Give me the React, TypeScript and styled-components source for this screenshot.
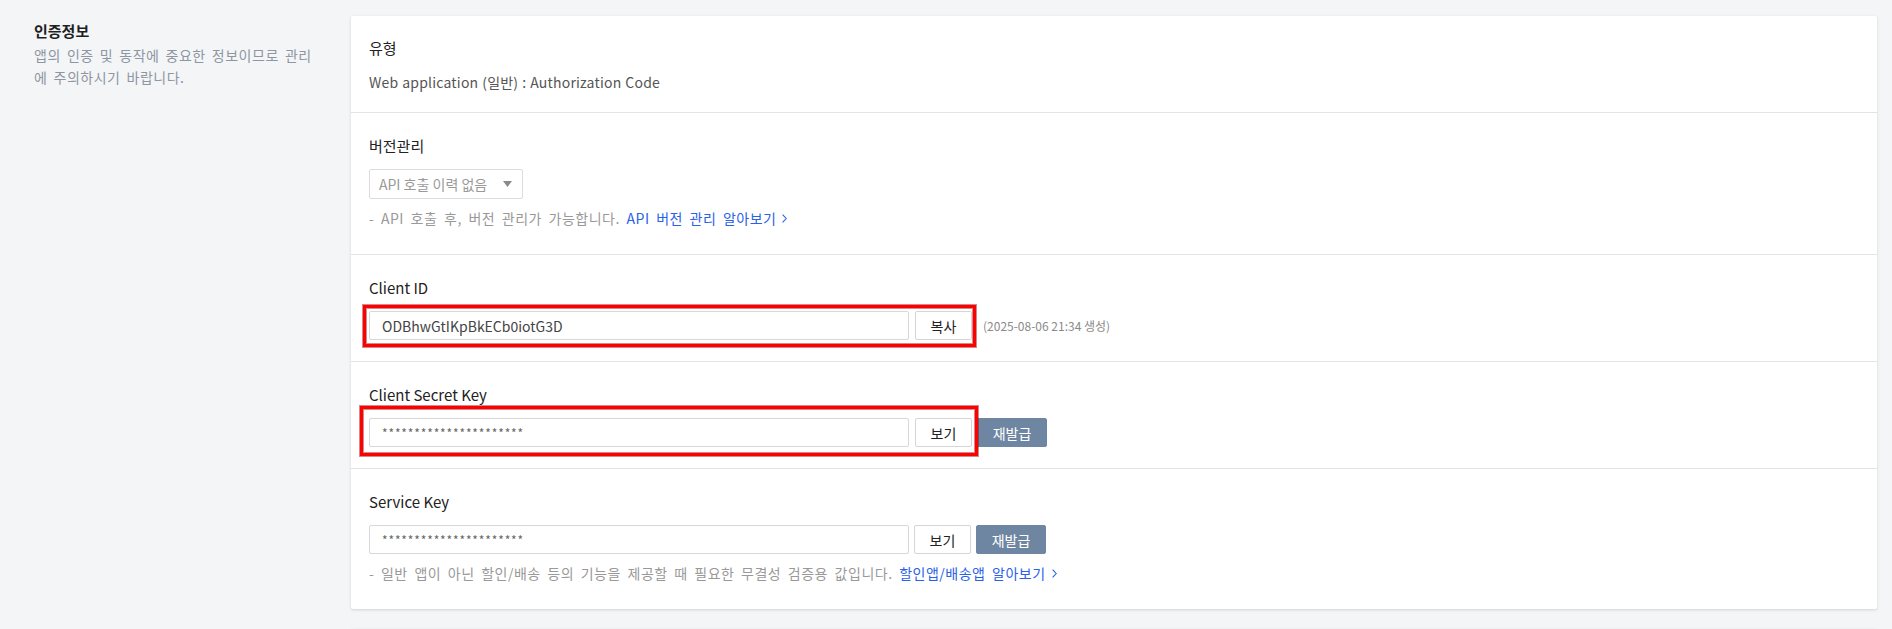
import React from "react";
import styled, { createGlobalStyle } from "styled-components";

const GlobalStyle = createGlobalStyle`
  html, body {
    margin: 0;
    padding: 0;
    background: #f4f5f7;
    font-family: "Noto Sans CJK KR", "Noto Sans", sans-serif;
    color: #222;
  }
  * { box-sizing: border-box; }
`;

const Page = styled.div`
  display: grid;
  grid-template-columns: 290px 1fr;
  column-gap: 27px;
  padding: 16px 15px 0 34px;
  align-items: start;
`;

const Aside = styled.div`
  display: flex;
  flex-direction: column;
  padding-top: 4px;
`;

const AsideTitle = styled.h2`
  margin: 0;
  font-size: 15px;
  line-height: 22px;
  font-weight: 700;
  color: #1f1f1f;
`;

const AsideDesc = styled.p`
  margin: 2px 0 0;
  font-size: 14px;
  line-height: 22px;
  letter-spacing: 0.5px;
  word-spacing: 2.5px;
  color: #8e96a3;
`;

const Cards = styled.div`
  display: flex;
  flex-direction: column;
  gap: 20px;
`;

const Card = styled.section`
  background: #fff;
  border-radius: 2px;
  box-shadow: 0 1px 3px rgba(0, 0, 0, 0.14);
  min-height: 40px;
`;

const Section = styled.div`
  padding: 22px 18px 21px;
  border-top: 1px solid #e4e4e4;
  &:first-child {
    border-top: none;
    padding: 21px 18px 19px;
  }
`;

const Label = styled.div`
  font-size: 15px;
  line-height: 22px;
  color: #222;
  margin-bottom: 12px;
`;

const Value = styled.div`
  font-size: 14px;
  line-height: 22px;
  letter-spacing: 0.2px;
  word-spacing: 0.6px;
  color: #555;
`;

const Select = styled.div`
  display: inline-flex;
  align-items: center;
  justify-content: space-between;
  height: 30px;
  width: 154px;
  padding: 0 10px 0 9px;
  border: 1px solid #dcdcdc;
  border-radius: 2px;
  font-size: 14px;
  color: #9a9a9a;
`;

const Help = styled.p`
  margin: 8px 0 4px;
  font-size: 14px;
  line-height: 22px;
  letter-spacing: 0.5px;
  word-spacing: 3px;
  color: #999;
`;

const HelpLink = styled.a`
  color: #2962e8;
  text-decoration: none;
  display: inline-flex;
  align-items: center;
  gap: 6px;
`;

const Row = styled.div`
  display: flex;
  align-items: center;
  gap: 5px;
`;

const Highlight = styled.div<{ $t: number; $r: number; $b: number; $l: number }>`
  position: relative;
  display: flex;
  align-items: center;
  gap: 6px;
  &::after {
    content: "";
    position: absolute;
    top: ${(p) => -p.$t}px;
    right: ${(p) => -p.$r}px;
    bottom: ${(p) => -p.$b}px;
    left: ${(p) => -p.$l}px;
    border: 3px solid #ff0000;
    box-shadow: 0 0 0 1px rgba(150, 0, 0, 0.45), inset 0 0 0 1px rgba(150, 0, 0, 0.45);
    pointer-events: none;
  }
`;

const Field = styled.div<{ $masked?: boolean }>`
  width: 540px;
  height: 29px;
  display: flex;
  align-items: center;
  padding: 0 12px;
  border: 1px solid #d8d8d8;
  border-radius: 2px;
  font-size: ${(p) => (p.$masked ? "12px" : "14px")};
  letter-spacing: ${(p) => (p.$masked ? "0.85px" : "0")};
  color: ${(p) => (p.$masked ? "#666" : "#444")};
`;

const Button = styled.button<{ $primary?: boolean }>`
  height: 29px;
  min-width: ${(p) => (p.$primary ? "70px" : "57px")};
  padding: 0 12px;
  border-radius: 2px;
  font-family: inherit;
  font-size: 14px;
  cursor: pointer;
  border: 1px solid ${(p) => (p.$primary ? "#6e86a1" : "#d5d5d5")};
  background: ${(p) => (p.$primary ? "#6e86a1" : "#fff")};
  color: ${(p) => (p.$primary ? "#fff" : "#222")};
`;

const Stamp = styled.span`
  font-size: 12px;
  color: #8a8a8a;
  margin-left: 6px;
`;

const Caret = () => (
  <svg width="9" height="6" viewBox="0 0 9 6">
    <path d="M0 0h9L4.5 6z" fill="#8a8a8a" />
  </svg>
);

const Chevron = () => (
  <svg width="5" height="9" viewBox="0 0 5 9">
    <path d="M0.6 0.6L4.2 4.5L0.6 8.4" fill="none" stroke="#2962e8" strokeWidth="1.1" />
  </svg>
);

const MASK = "**********************";

export default function App() {
  return (
    <>
      <GlobalStyle />
      <Page>
        <Aside>
          <AsideTitle>인증정보</AsideTitle>
          <AsideDesc>앱의 인증 및 동작에 중요한 정보이므로 관리에 주의하시기 바랍니다.</AsideDesc>
        </Aside>
        <Cards>
          <Card>
            <Section>
              <Label>유형</Label>
              <Value>Web application (일반) : Authorization Code</Value>
            </Section>
            <Section>
              <Label>버전관리</Label>
              <Select>
                API 호출 이력 없음
                <Caret />
              </Select>
              <Help>
                - API 호출 후, 버전 관리가 가능합니다.{" "}
                <HelpLink href="#">
                  API 버전 관리 알아보기
                  <Chevron />
                </HelpLink>
              </Help>
            </Section>
            <Section>
              <Label>Client ID</Label>
              <Row>
                <Highlight $t={6} $r={4} $b={7} $l={6}>
                  <Field>ODBhwGtIKpBkECb0iotG3D</Field>
                  <Button>복사</Button>
                </Highlight>
                <Stamp>(2025-08-06 21:34 생성)</Stamp>
              </Row>
            </Section>
            <Section>
              <Label>Client Secret Key</Label>
              <Row>
                <Highlight $t={12} $r={6} $b={9} $l={9}>
                  <Field $masked>{MASK}</Field>
                  <Button>보기</Button>
                </Highlight>
                <Button $primary>재발급</Button>
              </Row>
            </Section>
            <Section>
              <Label>Service Key</Label>
              <Row>
                <Field $masked>{MASK}</Field>
                <Button>보기</Button>
                <Button $primary>재발급</Button>
              </Row>
              <Help>
                - 일반 앱이 아닌 할인/배송 등의 기능을 제공할 때 필요한 무결성 검증용 값입니다.{" "}
                <HelpLink href="#">
                  할인앱/배송앱 알아보기
                  <Chevron />
                </HelpLink>
              </Help>
            </Section>
          </Card>
          <Card />
        </Cards>
      </Page>
    </>
  );
}
